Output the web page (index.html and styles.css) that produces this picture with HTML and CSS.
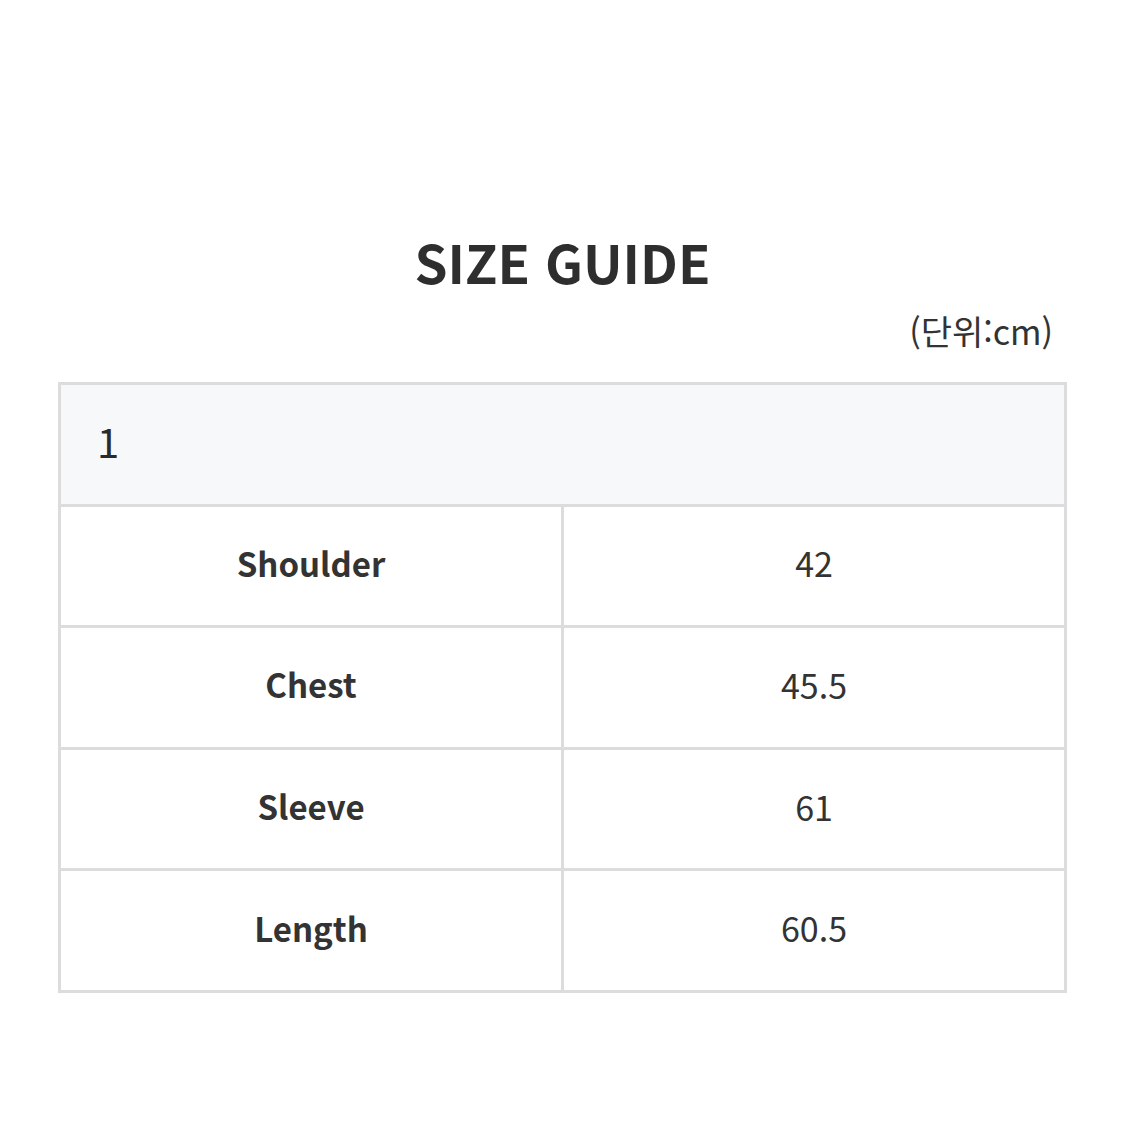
FILE: index.html
```html
<!DOCTYPE html>
<html lang="ko">
<head>
<meta charset="utf-8">
<link rel="stylesheet" href="styles.css">
</head>
<body>
<main class="page">
  <h1 class="title">SIZE GUIDE</h1>
  <p class="unit">(단위:cm)</p>
  <table class="size-table">
    <thead>
      <tr><th colspan="2" class="size-head">1</th></tr>
    </thead>
    <tbody>
      <tr><td class="label">Shoulder</td><td class="value">42</td></tr>
      <tr><td class="label">Chest</td><td class="value">45.5</td></tr>
      <tr><td class="label">Sleeve</td><td class="value">61</td></tr>
      <tr><td class="label">Length</td><td class="value">60.5</td></tr>
    </tbody>
  </table>
</main>
</body>
</html>
```
FILE: styles.css
```css
html, body {
  margin: 0;
  padding: 0;
  background: #ffffff;
}
body {
  font-family: "Noto Sans CJK KR", "Noto Sans", sans-serif;
  color: #333333;
}
.page {
  width: 1125px;
  height: 1125px;
  display: flex;
  flex-direction: column;
  align-items: center;
  padding-top: 223px;
  box-sizing: border-box;
}
.title {
  margin: 0;
  font-size: 53px;
  font-weight: 700;
  line-height: 76px;
  color: #2e2e2e;
}
.unit {
  margin: 12px 0 0 0;
  align-self: flex-end;
  padding-right: 72px;
  font-size: 34px;
  line-height: 40px;
  color: #333;
}
.size-table {
  margin-top: 31px;
  width: 1009px;
  border-collapse: collapse;
  border: 3px solid #dcdcdc;
  table-layout: fixed;
}
.size-table th, .size-table td {
  border: 3px solid #dcdcdc;
  height: 121.6px;
  padding: 0 0 6px 0;
  box-sizing: border-box;
  font-size: 34px;
}
.size-head {
  background: #f7f8fa;
  text-align: left;
  padding-left: 36px !important;
  font-size: 40px !important;
  font-weight: 400;
  color: #2a2a2a;
}
.label {
  text-align: center;
  font-size: 33px !important;
  font-weight: 600;
  color: #333;
}
.value {
  text-align: center;
  font-weight: 400;
  color: #333;
}
```
